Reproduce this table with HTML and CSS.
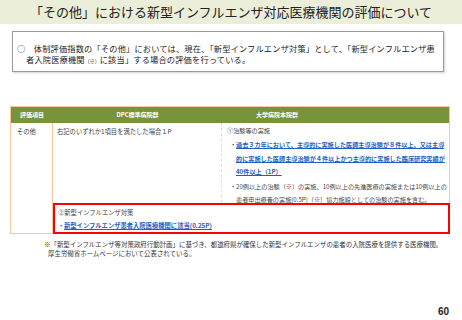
FILE: index.html
```html
<!DOCTYPE html>
<html lang="ja">
<head>
<meta charset="utf-8">
<link rel="stylesheet" href="styles.css">
</head>
<body>
<div class="title">「その他」における新型インフルエンザ対応医療機関の評価について</div>
<div class="summary">
  <div class="sum-line">○　体制評価指数の「その他」においては、現在、「新型インフルエンザ対策」として、「新型インフルエンザ患</div>
  <div class="sum-line indent">者入院医療機関<span class="small">（※）</span>に該当」する場合の評価を行っている。</div>
</div>
<div class="table">
  <div class="th th1">評価項目</div>
  <div class="th th2">DPC標準病院群</div>
  <div class="th th3">大学病院本院群</div>
  <div class="td c1">その他</div>
  <div class="td c2">右記のいずれか1項目を満たした場合１P</div>
  <div class="td c3">
    <div class="item-title">①治験等の実施</div>
    <div class="bullet blue"><span class="dot">・</span><span class="btext">過去３カ年において、主導的に実施した医師主導治験が８件以上、又は主導的に実施した医師主導治験が４件以上かつ主導的に実施した臨床研究実績が40件以上（1P）</span></div>
    <div class="bullet plain"><span class="dot">・</span><span class="ptext">20例以上の治験（※）の実施、10例以上の先進医療の実施または10例以上の患者申出療養の実施(0.5P)（※）協力施設としての治験の実施を含む。</span></div>
  </div>
  <div class="redbox">
    <div class="item-title">②新型インフルエンザ対策</div>
    <div class="bullet blue"><span class="dot">・</span><span class="btext">新型インフルエンザ患者入院医療機関に該当(0.25P)</span></div>
  </div>
</div>
<div class="note">
  <div>※「新型インフルエンザ等対策政府行動計画」に基づき、都道府県が確保した新型インフルエンザの患者の入院医療を提供する医療機関。</div>
  <div class="note2">厚生労働省ホームページにおいて公表されている。</div>
</div>
<div class="page">60</div>
</body>
</html>
```

FILE: styles.css
```css
html, body {
  margin: 0;
  padding: 0;
}
body {
  width: 462px;
  height: 320px;
  display: flex;
  flex-direction: column;
  font-family: "Noto Sans CJK JP", "Noto Sans", sans-serif;
  color: #333;
  background: #fff;
  overflow: hidden;
}
.title {
  height: 24px;
  background: #ebeed9;
  font-size: 13px;
  line-height: 24px;
  text-align: center;
  color: #222;
  white-space: nowrap;
}
.summary {
  box-sizing: border-box;
  height: 41px;
  margin: 7px 18px 0 12px;
  border: 1px solid #9a9a9a;
  box-shadow: 1px 1px 2px rgba(0, 0, 0, 0.18);
  padding: 11px 0 0 4px;
  font-size: 8.2px;
  line-height: 10.5px;
  letter-spacing: 0.2px;
  color: #222;
}
.sum-line {
  white-space: nowrap;
}
.sum-line.indent {
  padding-left: 9px;
}
.small {
  font-size: 5px;
  letter-spacing: 0;
}
.table {
  box-sizing: border-box;
  margin: 34px 0 0 10px;
  width: 440px;
  border: 1px solid #f6c79d;
  display: grid;
  grid-template-columns: 42px 169px 1fr;
  grid-template-rows: 16px 80px 30px;
  font-size: 6.3px;
}
.th {
  background: #77933c;
  color: #fff;
  font-weight: bold;
  font-size: 6px;
  line-height: 16px;
  white-space: nowrap;
}
.th1, .th2 {
  text-align: center;
}
.th3 {
  padding-left: 34px;
}
.td {
  color: #444;
  line-height: 13px;
}
.c1 {
  grid-row: 2 / 4;
  border-right: 1px solid #f6c79d;
  padding: 2px 0 0 6px;
}
.c2 {
  border-right: 1px dashed #f8d8bb;
  padding: 2px 0 0 4px;
}
.c3 {
  padding: 1px 2px 0 5px;
  font-size: 6.15px;
}
.item-title {
  line-height: 14px;
}
.bullet {
  display: flex;
  padding-left: 3px;
}
.dot {
  flex: none;
  width: 6px;
}
.blue {
  color: #1d5fc4;
  font-weight: bold;
  line-height: 13.5px;
}
.btext {
  text-decoration: underline;
}
.plain {
  line-height: 13px;
  margin-top: 1px;
}
.redbox {
  grid-column: 2 / 4;
  grid-row: 3;
  box-sizing: border-box;
  border: 2px solid #ff0000;
  margin: 0 -1px -1px 0;
  padding: 2px 0 0 3px;
  font-size: 6.3px;
  color: #444;
  line-height: 12px;
}
.redbox .bullet {
  padding-left: 0;
}
.redbox .item-title {
  line-height: 12px;
}
.note {
  margin: 6px 0 0 44px;
  font-size: 6.45px;
  line-height: 9px;
  color: #333;
  white-space: nowrap;
}
.note2 {
  padding-left: 4px;
}
.page {
  margin-top: auto;
  align-self: flex-end;
  margin-right: 13px;
  margin-bottom: 2px;
  font-family: "Liberation Sans", Arial, sans-serif;
  font-weight: bold;
  font-size: 10px;
  line-height: 12px;
  color: #222;
}
```
